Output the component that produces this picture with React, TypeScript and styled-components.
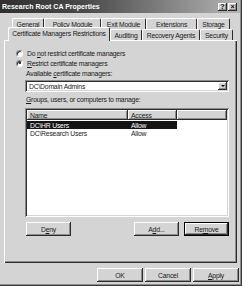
import styled, { createGlobalStyle, css } from "styled-components";

const face = "#d4d4d4";
const shade = "#8c8c8c";
const dark = "#2c2c2c";

const GlobalStyle = createGlobalStyle`
  html, body {
    margin: 0;
    padding: 0;
    background: ${face};
  }
  body {
    font-family: "Liberation Sans", Arial, sans-serif;
    font-size: 6.8px;
    letter-spacing: -0.2px;
    color: #1a1a1a;
  }
`;

const raised = css`
  background: ${face};
  box-shadow: inset -1px -1px ${dark}, inset 1px 1px #ffffff,
    inset -2px -2px ${shade};
`;

const sunken = css`
  background: #ffffff;
  box-shadow: inset 1px 1px ${shade}, inset -1px -1px #ffffff,
    inset 2px 2px ${dark}, inset -2px -2px ${face};
`;

const Window = styled.div`
  width: 242px;
  height: 286px;
  box-sizing: border-box;
  display: flex;
  flex-direction: column;
  background: ${face};
  padding: 0 2px 2px 0;
  box-shadow: inset -1px -1px #3a3a3a, inset -2px -2px ${shade};
`;

const TitleBar = styled.div`
  height: 13px;
  display: flex;
  align-items: center;
  padding: 0 3px 0 2px;
  background: linear-gradient(to right, #2f2f2f 0%, #4a4a4a 35%, #b4b4b4 100%);
`;

const Title = styled.span`
  flex: 1;
  color: #ffffff;
  font-weight: bold;
  font-size: 7px;
  letter-spacing: 0;
`;

const TitleButton = styled.span<{ $gap?: number }>`
  ${raised};
  width: 9px;
  height: 8px;
  margin-left: ${(p) => p.$gap ?? 0}px;
  display: flex;
  align-items: center;
  justify-content: center;
  font-weight: bold;
  font-size: 7px;
  line-height: 1;
  letter-spacing: 0;
  color: #000;
`;

const Body = styled.div`
  flex: 1;
  display: flex;
  flex-direction: column;
  padding: 5px 1px 0 4px;
`;

const TabRow = styled.div<{ $indent: number }>`
  display: flex;
  height: 11px;
  padding-left: ${(p) => p.$indent}px;
  position: relative;
  z-index: ${(p) => (p.$indent > 5 ? 0 : 1)};
`;

const Tab = styled.div<{ $w: number; $active?: boolean }>`
  width: ${(p) => p.$w}px;
  box-sizing: border-box;
  height: ${(p) => (p.$active ? 14 : 11)}px;
  margin-top: ${(p) => (p.$active ? -2 : 0)}px;
  border-top: 1px solid #ffffff;
  border-left: 1px solid #ffffff;
  border-right: 1px solid ${dark};
  border-radius: 2px 2px 0 0;
  background: ${face};
  display: flex;
  align-items: center;
  justify-content: center;
  white-space: nowrap;
  padding-bottom: ${(p) => (p.$active ? 2 : 0)}px;
  position: relative;
  z-index: ${(p) => (p.$active ? 2 : 1)};
`;

const Panel = styled.div`
  width: 233px;
  height: 223px;
  box-sizing: border-box;
  display: flex;
  flex-direction: column;
  padding: 7px 0 0 11px;
  background: ${face};
  border-top: 1px solid #ffffff;
  border-left: 1px solid #ffffff;
  box-shadow: inset -1px -1px ${dark}, inset -2px -2px ${shade};
`;

const RadioRow = styled.label`
  display: flex;
  align-items: center;
  height: 10px;
  gap: 4px;
  white-space: nowrap;
`;

const RadioDot = styled.span<{ $checked?: boolean }>`
  width: 7px;
  height: 7px;
  box-sizing: border-box;
  border-radius: 50%;
  background: #ffffff;
  border: 1px solid;
  border-color: ${shade} #ffffff #ffffff ${shade};
  box-shadow: inset 1px 1px ${dark};
  display: flex;
  align-items: center;
  justify-content: center;
  &::after {
    content: "";
    width: 2px;
    height: 2px;
    border-radius: 50%;
    background: ${(p) => (p.$checked ? "#000" : "transparent")};
  }
`;

const Indented = styled.div`
  display: flex;
  flex-direction: column;
  margin-left: 9px;
  width: 204px;
`;

const FieldLabel = styled.div<{ $h: number }>`
  height: ${(p) => p.$h}px;
  display: flex;
  align-items: center;
  padding-left: 1px;
  white-space: nowrap;
`;

const Combo = styled.div`
  ${sunken};
  height: 12px;
  margin-top: 2px;
  display: flex;
  align-items: center;
  padding: 0 2px 0 4px;
`;

const ComboText = styled.span`
  flex: 1;
`;

const DropButton = styled.span`
  ${raised};
  width: 9px;
  height: 8px;
  display: flex;
  align-items: center;
  justify-content: center;
  &::after {
    content: "";
    border-left: 2px solid transparent;
    border-right: 2px solid transparent;
    border-top: 2px solid #000;
  }
`;

const ListView = styled.div`
  ${sunken};
  height: 109px;
  margin-top: 1px;
  padding: 2px;
  box-sizing: border-box;
  display: flex;
  flex-direction: column;
`;

const Header = styled.div`
  display: grid;
  grid-template-columns: 101px 49px 1fr;
  height: 10px;
`;

const HeaderCell = styled.div`
  ${raised};
  display: flex;
  align-items: center;
  padding-left: 3px;
`;

const Row = styled.div<{ $selected?: boolean }>`
  display: grid;
  grid-template-columns: 101px 49px;
  width: 150px;
  height: 8px;
  align-items: center;
  margin-top: ${(p) => (p.$selected ? 1 : 0)}px;
  background: ${(p) => (p.$selected ? "#141414" : "transparent")};
  color: ${(p) => (p.$selected ? "#ffffff" : "inherit")};
  & > span {
    padding-left: 3px;
    white-space: nowrap;
  }
`;

const ButtonRow = styled.div<{ $end?: boolean }>`
  display: flex;
  gap: ${(p) => (p.$end ? 2 : 5)}px;
  margin-top: 5px;
  justify-content: ${(p) => (p.$end ? "flex-end" : "flex-start")};
  padding: ${(p) => (p.$end ? "0" : "0 0 0 1px")};
`;

const Spacer = styled.div`
  flex: 1;
`;

const Button = styled.button<{ $default?: boolean; $w?: number }>`
  ${raised};
  width: ${(p) => p.$w ?? 45}px;
  height: 14px;
  border: ${(p) => (p.$default ? `1px solid #000` : "none")};
  padding: 0;
  font: inherit;
  letter-spacing: inherit;
  color: #1a1a1a;
  display: flex;
  align-items: center;
  justify-content: center;
`;

export default function App() {
  return (
    <>
      <GlobalStyle />
      <Window>
        <TitleBar>
          <Title>Research Root CA Properties</Title>
          <TitleButton>?</TitleButton>
          <TitleButton $gap={1}>×</TitleButton>
        </TitleBar>
        <Body>
          <TabRow $indent={8}>
            <Tab $w={32}>General</Tab>
            <Tab $w={57}>Policy Module</Tab>
            <Tab $w={45}>Exit Module</Tab>
            <Tab $w={51}>Extensions</Tab>
            <Tab $w={33}>Storage</Tab>
          </TabRow>
          <TabRow $indent={4}>
            <Tab $w={102} $active>
              Certificate Managers Restrictions
            </Tab>
            <Tab $w={32}>Auditing</Tab>
            <Tab $w={58}>Recovery Agents</Tab>
            <Tab $w={33}>Security</Tab>
          </TabRow>
          <Panel>
            <RadioRow>
              <RadioDot />
              <span>
                Do <u>n</u>ot restrict certificate managers
              </span>
            </RadioRow>
            <RadioRow>
              <RadioDot $checked />
              <span>
                <u>R</u>estrict certificate managers
              </span>
            </RadioRow>
            <Indented>
              <FieldLabel $h={10}>
                Available&nbsp;<u>c</u>ertificate managers:
              </FieldLabel>
              <Combo>
                <ComboText>DC\Domain Admins</ComboText>
                <DropButton />
              </Combo>
              <FieldLabel $h={15}>
                <u>G</u>roups, users, or computers to manage:
              </FieldLabel>
              <ListView>
                <Header>
                  <HeaderCell>Name</HeaderCell>
                  <HeaderCell>Access</HeaderCell>
                  <HeaderCell />
                </Header>
                <Row $selected>
                  <span>DC\HR Users</span>
                  <span>Allow</span>
                </Row>
                <Row>
                  <span>DC\Research Users</span>
                  <span>Allow</span>
                </Row>
              </ListView>
              <ButtonRow>
                <Button>
                  D<u>e</u>ny
                </Button>
                <Spacer />
                <Button>
                  A<u>d</u>d...
                </Button>
                <Button $default>
                  Re<u>m</u>ove
                </Button>
              </ButtonRow>
            </Indented>
          </Panel>
          <ButtonRow $end>
            <Button $w={46}>OK</Button>
            <Button $w={46}>Cancel</Button>
            <Button $w={46}>
              <u>A</u>pply
            </Button>
          </ButtonRow>
        </Body>
      </Window>
    </>
  );
}
